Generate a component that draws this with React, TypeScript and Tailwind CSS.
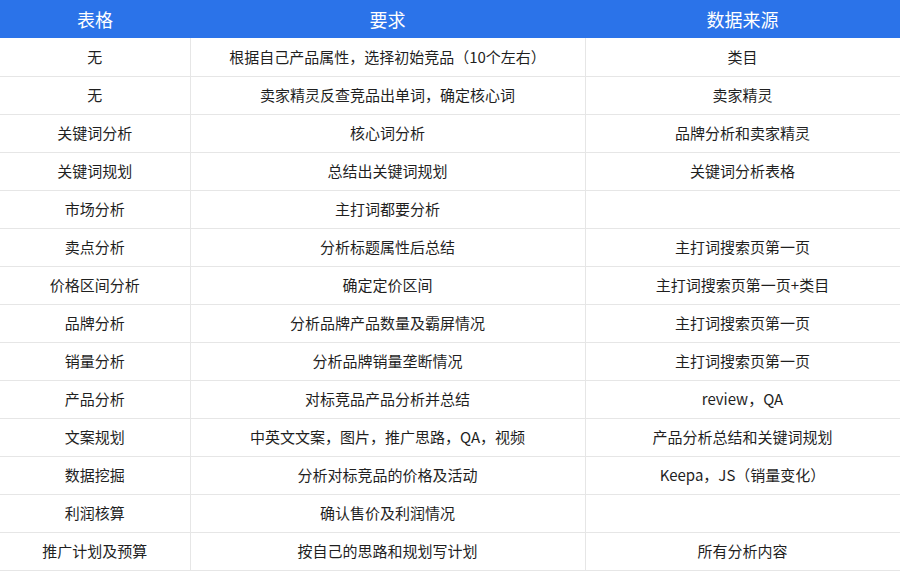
import React from "react";

const rows: [string, string, string][] = [
  ["无", "根据自己产品属性，选择初始竞品（10个左右）", "类目"],
  ["无", "卖家精灵反查竞品出单词，确定核心词", "卖家精灵"],
  ["关键词分析", "核心词分析", "品牌分析和卖家精灵"],
  ["关键词规划", "总结出关键词规划", "关键词分析表格"],
  ["市场分析", "主打词都要分析", ""],
  ["卖点分析", "分析标题属性后总结", "主打词搜索页第一页"],
  ["价格区间分析", "确定定价区间", "主打词搜索页第一页+类目"],
  ["品牌分析", "分析品牌产品数量及霸屏情况", "主打词搜索页第一页"],
  ["销量分析", "分析品牌销量垄断情况", "主打词搜索页第一页"],
  ["产品分析", "对标竞品产品分析并总结", "review，QA"],
  ["文案规划", "中英文文案，图片，推广思路，QA，视频", "产品分析总结和关键词规划"],
  ["数据挖掘", "分析对标竞品的价格及活动", "Keepa，JS（销量变化）"],
  ["利润核算", "确认售价及利润情况", ""],
  ["推广计划及预算", "按自己的思路和规划写计划", "所有分析内容"],
];

export default function App() {
  return (
    <div
      className="w-[900px] h-[573px] bg-white"
      style={{ fontFamily: '"Noto Sans CJK SC", "Noto Sans", sans-serif' }}
    >
      <table className="w-[900px] table-fixed border-collapse">
        <colgroup>
          <col className="w-[190px]" />
          <col className="w-[395px]" />
          <col className="w-[315px]" />
        </colgroup>
        <thead>
          <tr className="h-[38px] bg-[#2b73e9] text-white text-[18px]">
            <th className="font-normal">表格</th>
            <th className="font-normal">要求</th>
            <th className="font-normal">数据来源</th>
          </tr>
        </thead>
        <tbody className="text-[15px] text-[#1f1f1f]">
          {rows.map((r, i) => (
            <tr key={i} className="h-[38px] border-b border-[#e6e6e6]">
              <td className="text-center border-r border-[#e6e6e6]">{r[0]}</td>
              <td className="text-center border-r border-[#e6e6e6]">{r[1]}</td>
              <td className="text-center border-r border-[#e6e6e6]">{r[2]}</td>
            </tr>
          ))}
        </tbody>
      </table>
    </div>
  );
}
